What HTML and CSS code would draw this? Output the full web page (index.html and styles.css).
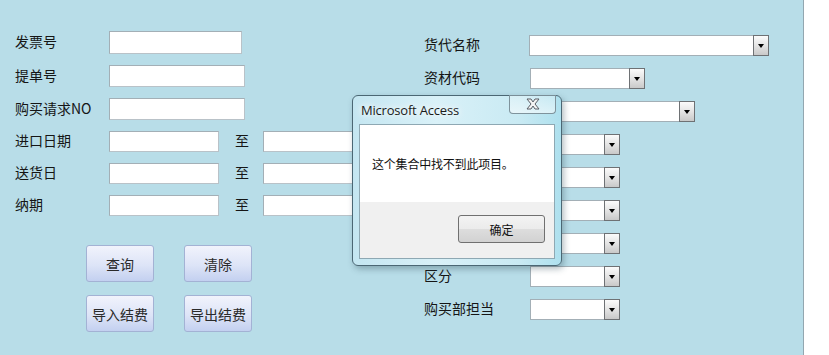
FILE: index.html
```html
<!DOCTYPE html>
<html lang="zh-CN">
<head>
    <meta charset="UTF-8">
    <meta name="viewport" content="width=device-width, initial-scale=1.0">
    <title>结费查询</title>
    <link rel="stylesheet" href="styles.css">
</head>
<body>
    <div class="form-area">
        <div class="left-panel">
            <div class="field-list">
                <div class="field-row">
                    <span class="label">发票号</span>
                    <input type="text" class="text-box box-w132">
                </div>
                <div class="field-row">
                    <span class="label">提单号</span>
                    <input type="text" class="text-box box-w135">
                </div>
                <div class="field-row">
                    <span class="label">购买请求NO</span>
                    <input type="text" class="text-box box-w135">
                </div>
                <div class="field-row">
                    <span class="label">进口日期</span>
                    <input type="text" class="text-box box-w109">
                    <span class="range-sep">至</span>
                    <input type="text" class="text-box box-w109">
                </div>
                <div class="field-row">
                    <span class="label">送货日</span>
                    <input type="text" class="text-box box-w109">
                    <span class="range-sep">至</span>
                    <input type="text" class="text-box box-w109">
                </div>
                <div class="field-row">
                    <span class="label">纳期</span>
                    <input type="text" class="text-box box-w109">
                    <span class="range-sep">至</span>
                    <input type="text" class="text-box box-w109">
                </div>
            </div>

            <div class="actions">
                <button class="btn">查询</button>
                <button class="btn">清除</button>
                <button class="btn">导入结费</button>
                <button class="btn">导出结费</button>
            </div>
        </div>

        <div class="right-panel">
            <div class="combo-row">
                <span class="label label-wide">货代名称</span>
                <div class="combo combo-w240"><span class="combo-field"></span><span class="combo-arrow"></span></div>
            </div>
            <div class="combo-row">
                <span class="label label-wide">资材代码</span>
                <div class="combo combo-w115 shift-1"><span class="combo-field"></span><span class="combo-arrow"></span></div>
            </div>
            <div class="combo-row">
                <span class="label label-wide"></span>
                <div class="combo combo-w165 shift-1"><span class="combo-field"></span><span class="combo-arrow"></span></div>
            </div>
            <div class="combo-row">
                <span class="label label-wide"></span>
                <div class="combo combo-w90 shift-1"><span class="combo-field"></span><span class="combo-arrow"></span></div>
            </div>
            <div class="combo-row">
                <span class="label label-wide"></span>
                <div class="combo combo-w90 shift-1"><span class="combo-field"></span><span class="combo-arrow"></span></div>
            </div>
            <div class="combo-row">
                <span class="label label-wide"></span>
                <div class="combo combo-w90 shift-1"><span class="combo-field"></span><span class="combo-arrow"></span></div>
            </div>
            <div class="combo-row">
                <span class="label label-wide"></span>
                <div class="combo combo-w90 shift-1"><span class="combo-field"></span><span class="combo-arrow"></span></div>
            </div>
            <div class="combo-row">
                <span class="label label-wide">区分</span>
                <div class="combo combo-w90 shift-1"><span class="combo-field"></span><span class="combo-arrow"></span></div>
            </div>
            <div class="combo-row">
                <span class="label label-wide">购买部担当</span>
                <div class="combo combo-w90 shift-1"><span class="combo-field"></span><span class="combo-arrow"></span></div>
            </div>
        </div>

        <div class="msg-dialog">
            <div class="dialog-title">
                <span class="title-text">Microsoft Access</span>
                <span class="close-btn">
                    <svg width="16" height="12" viewBox="0 0 16 12">
                        <path d="M2 1 H6 L8 4 L10 1 H14 L10 6 L14 11 H10 L8 8 L6 11 H2 L6 6 Z" fill="#f4f4f4" stroke="#5a5f66" stroke-width="1" stroke-linejoin="round"/>
                    </svg>
                </span>
            </div>
            <div class="dialog-body">
                <div class="dialog-message">这个集合中找不到此项目。</div>
                <div class="dialog-footer">
                    <button class="ok-btn">确定</button>
                </div>
            </div>
        </div>
    </div>
</body>
</html>
```

FILE: styles.css
```css
:root {
    --form-bg: #b8dde8;
    --box-border: #a3afb6;
    --text-color: #151515;
    --cjk: "Noto Sans CJK SC", "Noto Sans", sans-serif;
}

* {
    margin: 0;
    padding: 0;
    box-sizing: border-box;
}

body {
    background: #ffffff;
    width: 829px;
    height: 355px;
    overflow: hidden;
    font-family: var(--cjk);
    color: var(--text-color);
}

.form-area {
    position: relative;
    width: 804px;
    height: 355px;
    background: var(--form-bg);
    border-right: 1px solid #93a7b0;
    display: flex;
}

/* left side */

.left-panel {
    width: 424px;
    padding: 31px 0 0 15px;
}

.field-list {
    display: flex;
    flex-direction: column;
    gap: 11px;
}

.field-row {
    display: flex;
    align-items: center;
    height: 21px;
}

.field-row:first-child {
    height: 23px;
}

.field-row:nth-child(2),
.field-row:nth-child(3) {
    height: 22px;
}

.label {
    width: 94px;
    flex-shrink: 0;
    font-size: 14px;
    line-height: 16px;
    padding-bottom: 3px;
    white-space: nowrap;
}

.label-wide {
    width: 105px;
}

.text-box {
    height: 100%;
    border: 1px solid var(--box-border);
    border-right-color: #b9c2c8;
    border-bottom-color: #b9c2c8;
    background: #ffffff;
    outline: none;
}

.box-w132 { width: 133px; }
.box-w135 { width: 136px; }
.box-w109 { width: 110px; }

.range-sep {
    width: 14px;
    margin: 0 14px 0 16px;
    font-size: 14px;
    line-height: 16px;
    padding-bottom: 3px;
}

.actions {
    display: grid;
    grid-template-columns: 68px 68px;
    column-gap: 30px;
    row-gap: 13px;
    margin: 29px 0 0 71px;
}

.btn {
    height: 37px;
    border: 1px solid #a3b2d4;
    border-radius: 3px;
    background: linear-gradient(#f1f3fc, #dde4f7 55%, #c3d0f0);
    font-family: var(--cjk);
    font-size: 14px;
    color: #2a2a2a;
    white-space: nowrap;
    cursor: pointer;
}

/* right side */

.right-panel {
    padding-top: 35px;
    display: flex;
    flex-direction: column;
    gap: 12px;
}

.combo-row {
    display: flex;
    align-items: center;
    height: 21px;
}

.combo {
    display: flex;
    height: 21px;
}

.shift-1 {
    margin-left: 1px;
}

.combo-w240 { width: 240px; }
.combo-w115 { width: 115px; }
.combo-w165 { width: 165px; }
.combo-w90 { width: 90px; }

.combo-field {
    flex: 1;
    background: #ffffff;
    border: 1px solid var(--box-border);
    border-right: none;
}

.combo-arrow {
    position: relative;
    width: 16px;
    border: 1px solid #6e7174;
    background: linear-gradient(#fbfbfb, #e4e4e4 50%, #c9c9c9);
}

.combo-arrow::after {
    content: "";
    position: absolute;
    left: 4px;
    top: 8px;
    border-top: 4px solid #000;
    border-left: 3.5px solid transparent;
    border-right: 3.5px solid transparent;
}

/* message box */

.msg-dialog {
    position: absolute;
    left: 352px;
    top: 95px;
    width: 210px;
    height: 171px;
    border: 1px solid #4b6774;
    border-radius: 6px;
    background: linear-gradient(90deg, #c4e6f1, #d9f1f8 40%, #c9eaf3 80%, #aee0ee);
    box-shadow: 2px 3px 6px rgba(40, 70, 80, 0.35);
    padding: 0 6px 6px 6px;
    display: flex;
    flex-direction: column;
}

.dialog-title {
    position: relative;
    height: 28px;
    padding: 5px 0 0 2px;
    font-size: 13px;
    line-height: 18px;
}

.title-text {
    display: block;
    font-family: "Open Sans", "Noto Sans", sans-serif;
    font-size: 13px;
    line-height: 18px;
    letter-spacing: -0.2px;
    color: #1b1b1b;
    text-shadow: 0 0 6px #ffffff, 0 0 10px #ffffff;
}

.close-btn {
    position: absolute;
    right: -1px;
    top: -1px;
    width: 47px;
    height: 19px;
    border: 1px solid #7f939c;
    border-top: none;
    border-radius: 0 0 4px 4px;
    background: linear-gradient(rgba(255, 255, 255, 0.25), rgba(255, 255, 255, 0.55));
    display: flex;
    justify-content: center;
    align-items: center;
}

.dialog-body {
    flex: 1;
    border: 1px solid #8ea8b3;
    background: #f0f0f0;
    display: flex;
    flex-direction: column;
}

.dialog-message {
    height: 77px;
    background: #ffffff;
    padding: 31px 0 0 12px;
    font-size: 12px;
    line-height: 16px;
    letter-spacing: -0.2px;
    color: #111;
}

.dialog-footer {
    flex: 1;
    display: flex;
    justify-content: flex-end;
    padding: 13px 9px 0 0;
}

.ok-btn {
    width: 87px;
    height: 28px;
    border: 1px solid #707070;
    border-radius: 3px;
    background: linear-gradient(#f3f3f3, #ebebeb 50%, #dddddd 51%, #d2d2d2);
    font-family: var(--cjk);
    font-size: 12px;
    color: #111;
}
```
